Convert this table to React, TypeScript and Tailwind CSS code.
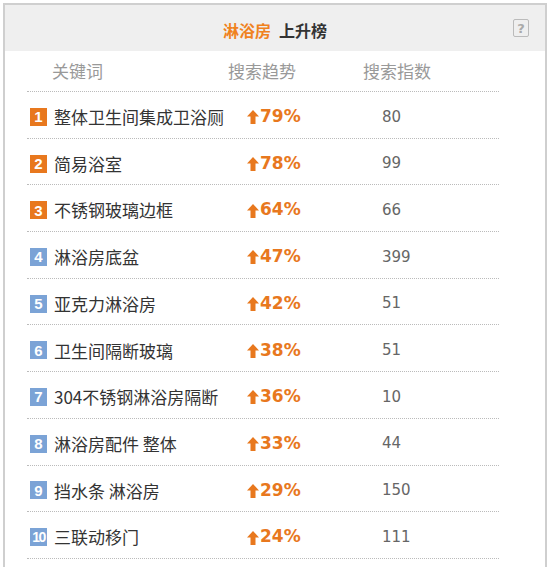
const rows = [
  { n: 1, kw: "整体卫生间集成卫浴厕", pct: "79%", idx: "80" },
  { n: 2, kw: "简易浴室", pct: "78%", idx: "99" },
  { n: 3, kw: "不锈钢玻璃边框", pct: "64%", idx: "66" },
  { n: 4, kw: "淋浴房底盆", pct: "47%", idx: "399" },
  { n: 5, kw: "亚克力淋浴房", pct: "42%", idx: "51" },
  { n: 6, kw: "卫生间隔断玻璃", pct: "38%", idx: "51" },
  { n: 7, kw: "304不锈钢淋浴房隔断", pct: "36%", idx: "10" },
  { n: 8, kw: "淋浴房配件 整体", pct: "33%", idx: "44" },
  { n: 9, kw: "挡水条 淋浴房", pct: "29%", idx: "150" },
  { n: 10, kw: "三联动移门", pct: "24%", idx: "111" },
];

const cjk = "font-['Microsoft_YaHei','Noto_Sans_CJK_SC',sans-serif]";

const ArrowUp = () => (
  <svg width="12" height="14" viewBox="0 0 12 14" className="mr-[1px] mt-[1px]">
    <path d="M6 0 L12 6.5 L8.5 6.5 L8.5 14 L3.5 14 L3.5 6.5 L0 6.5 Z" fill="#e8781e" />
  </svg>
);

const App = () => {
  return (
    <div className="w-[550px] h-[567px] bg-white pt-[3px] px-[3px] overflow-hidden">
      <div className="h-full border-x-2 border-t-2 border-[#cfcfcf] bg-white">
        <div className="relative h-[46px] pt-[4px] bg-[#efefef] flex items-center justify-center">
          <span className={`${cjk} text-[16px] font-bold text-[#f0821e]`}>淋浴房</span>
          <span className={`${cjk} text-[16px] font-bold text-[#333] ml-[8px]`}>上升榜</span>
          <div className="absolute right-[16px] top-[14px] w-[16px] h-[18px] border border-[#bbb] rounded-[2px] flex items-center justify-center text-[13px] leading-none text-[#aaa] font-['DejaVu_Sans',sans-serif] font-bold">
            ?
          </div>
        </div>
        <div className="ml-[22px] mr-[46px]">
          <div className={`${cjk} h-[41px] flex items-center text-[17px] text-[#999] border-b border-dotted border-[#bbb]`}>
            <span className="ml-[25px] w-[176px]">关键词</span>
            <span className="w-[135px]">搜索趋势</span>
            <span>搜索指数</span>
          </div>
          {rows.map((r) => (
            <div key={r.n} className="h-[46.7px] pt-[4px] flex items-center border-b border-dotted border-[#bbb]">
              <span
                className={`ml-[3px] w-[17px] h-[18px] flex items-center justify-center text-white leading-none font-['Liberation_Sans',sans-serif] font-bold ${
                  r.n <= 3 ? "bg-[#e8781e]" : "bg-[#7ba3d6]"
                } ${r.n === 10 ? "tracking-[-1.5px] text-[14px]" : "text-[15px]"}`}
              >
                {r.n}
              </span>
              <span className={`${cjk} ml-[7px] w-[193px] text-[17px] text-[#333] whitespace-nowrap`}>{r.kw}</span>
              <span className="w-[135px] flex items-center">
                <ArrowUp />
                <span className="font-['DejaVu_Sans',sans-serif] font-bold text-[17px] text-[#e8781e]">{r.pct}</span>
              </span>
              <span className="font-['DejaVu_Sans',sans-serif] text-[15px] text-[#666]">{r.idx}</span>
            </div>
          ))}
        </div>
      </div>
    </div>
  );
};

export default App;
